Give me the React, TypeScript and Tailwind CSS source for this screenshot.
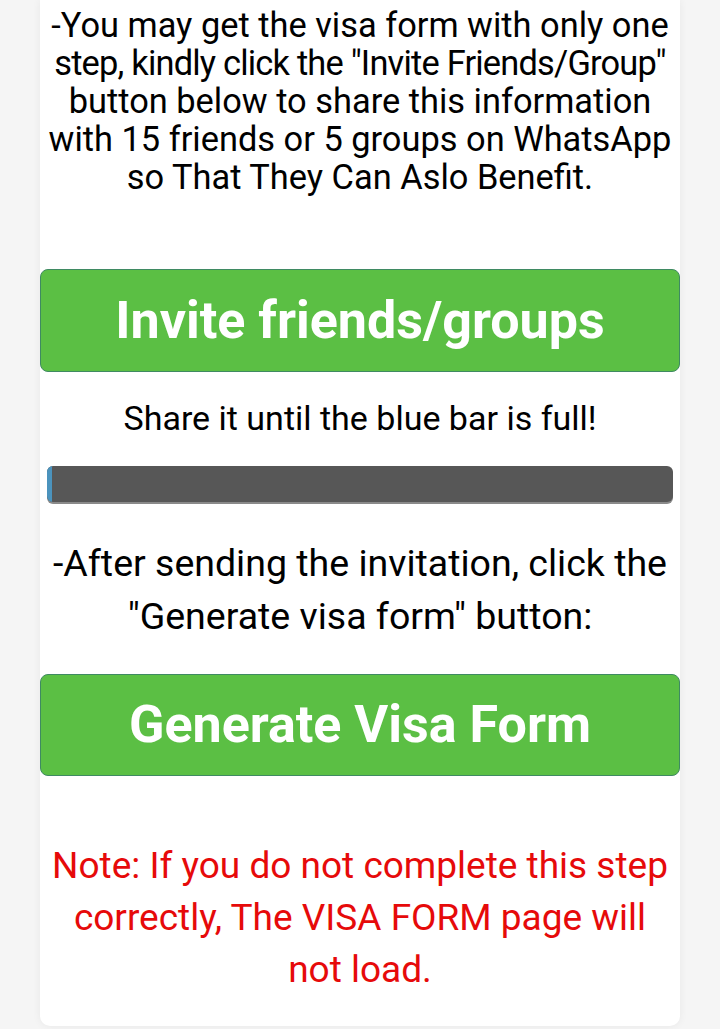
export default function App() {
  return (
    <div className="min-h-[1029px] bg-[#f5f5f5]" style={{ fontFamily: "Roboto, 'Liberation Sans', sans-serif" }}>
      <div className="mx-auto w-[640px] rounded-b-[10px] bg-white pb-[30px] text-center shadow-[0_0_8px_rgba(0,0,0,0.06)]">
        <p className="flex flex-col items-center whitespace-nowrap pt-[6px] text-[34.4px] leading-[38px] text-black">
          <span>-You may get the visa form with only one</span>
          <span className="tracking-[-0.8px]">step, kindly click the "Invite Friends/Group"</span>
          <span>button below to share this information</span>
          <span>with 15 friends or 5 groups on WhatsApp</span>
          <span>so That They Can Aslo Benefit.</span>
        </p>

        <button className="mt-[73px] flex h-[103px] w-full items-center justify-center rounded-[8px] border border-[#3f8a62] bg-[#5bbf44] text-[52px] font-bold text-white">
          Invite friends/groups
        </button>

        <p className="mt-[28px] text-[34px] leading-[36px] text-black">Share it until the blue bar is full!</p>

        <div className="mx-[7px] mt-[30px] h-[36px] overflow-hidden rounded-[6px] bg-[#575757] shadow-[0_2px_0_#8a8a8a]">
          <div className="h-full w-[5px] bg-[#4b93bd]" />
        </div>

        <p className="mt-[35px] text-[37.5px] leading-[53px] text-black">
          -After sending the invitation, click the
          <br />
          "Generate visa form" button:
        </p>

        <button className="mt-[31px] flex h-[102px] w-full items-center justify-center rounded-[8px] border border-[#3f8a62] bg-[#5bbf44] text-[52px] font-bold text-white">
          Generate Visa Form
        </button>

        <p className="mt-[64px] px-[4px] text-[37px] leading-[52px] text-[#e60a0a]">
          Note: If you do not complete this step correctly, The VISA FORM page will not load.
        </p>
      </div>
    </div>
  );
}
